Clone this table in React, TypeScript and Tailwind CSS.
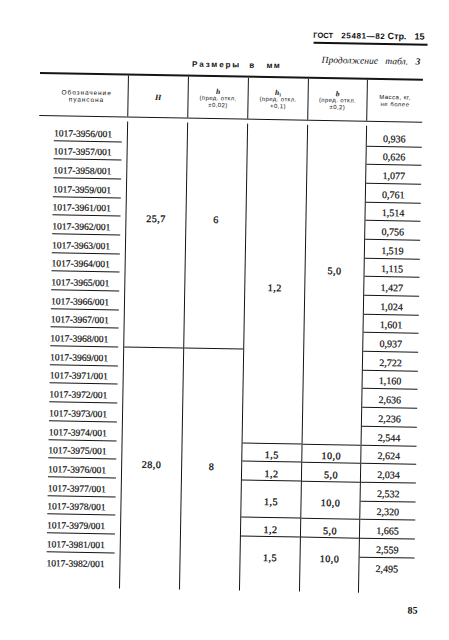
const rows: [string, string][] = [
  ['1017-3956/001', '0,936'],
  ['1017-3957/001', '0,626'],
  ['1017-3958/001', '1,077'],
  ['1017-3959/001', '0,761'],
  ['1017-3961/001', '1,514'],
  ['1017-3962/001', '0,756'],
  ['1017-3963/001', '1,519'],
  ['1017-3964/001', '1,115'],
  ['1017-3965/001', '1,427'],
  ['1017-3966/001', '1,024'],
  ['1017-3967/001', '1,601'],
  ['1017-3968/001', '0,937'],
  ['1017-3969/001', '2,722'],
  ['1017-3971/001', '1,160'],
  ['1017-3972/001', '2,636'],
  ['1017-3973/001', '2,236'],
  ['1017-3974/001', '2,544'],
  ['1017-3975/001', '2,624'],
  ['1017-3976/001', '2,034'],
  ['1017-3977/001', '2,532'],
  ['1017-3978/001', '2,320'],
  ['1017-3979/001', '1,665'],
  ['1017-3981/001', '2,559'],
  ['1017-3982/001', '2,495'],
]

// first body row is a bit taller (gap under the header)
const rowH = (i: number) => (i === 0 ? 'h-[20.5px]' : 'h-[18.7px]')

const val = 'text-[10px] leading-[10px] tracking-[0.5px] [-webkit-text-stroke:0.3px_#111]'
const line = 'border-[#151515]'
const small = "font-['Liberation_Sans',sans-serif] text-[6px] leading-[7px] tracking-[0.4px]"

function HeadTol({ sym, tol, w }: { sym: React.ReactNode; tol: string; w: string }) {
  return (
    <div className={`flex ${w} flex-col items-center justify-center border-l ${line} pt-[2px]`}>
      <span className="text-[7.5px] font-bold italic leading-[7px]">{sym}</span>
      <span className={small}>(пред. откл.</span>
      <span className={small}>{tol}</span>
    </div>
  )
}

// h1 / b columns: one long cell, then the short alternating cells
function LowerCells({ vals }: { vals: string[] }) {
  return (
    <>
      <div className={`flex h-[18.7px] items-end justify-center border-b ${line} pb-[1px] ${val}`}>{vals[0]}</div>
      <div className={`flex h-[18.7px] items-end justify-center border-b ${line} pb-[1px] ${val}`}>{vals[1]}</div>
      <div className={`flex h-[37.4px] items-center justify-center border-b ${line} pt-[6px] ${val}`}>{vals[2]}</div>
      <div className={`flex h-[18.7px] items-end justify-center border-b ${line} pb-[1px] ${val}`}>{vals[3]}</div>
      <div className={`flex h-[37.4px] items-center justify-center pt-[4px] ${val}`}>{vals[4]}</div>
      <div className="h-[16px]" />
    </>
  )
}

function Table() {
  return (
    <div className="ml-[40px] w-[383px]">
      <div className={`flex h-[44px] border-t-2 border-b-[1.5px] ${line}`}>
        <div className="flex w-[88px] flex-col items-center justify-center pl-[6px] font-['Liberation_Sans',sans-serif] text-[6.5px] leading-[7px] tracking-[0.9px]">
          <span>Обозначение</span>
          <span>пуансона</span>
        </div>
        <div className={`flex w-[60px] items-center justify-center border-l ${line} pt-[3px] text-[8px] font-bold italic`}>
          H
        </div>
        <HeadTol w="w-[60px]" sym="h" tol="±0,02)" />
        <HeadTol
          w="w-[60px]"
          sym={
            <>
              h<sub className="text-[4.5px] not-italic">1</sub>
            </>
          }
          tol="+0,1)"
        />
        <HeadTol w="w-[59px]" sym="b" tol="±0,2)" />
        <div className={`flex w-[56px] flex-col items-center justify-center border-l ${line} font-['Liberation_Sans',sans-serif] text-[6px] leading-[7px] tracking-[0.5px]`}>
          <span>Масса, кг,</span>
          <span>не более</span>
        </div>
      </div>

      <div className="mt-[4px] flex">
        <div className="flex w-[88px] flex-col">
          {rows.map(([d], i) => (
            <div key={d} className={`${rowH(i)} flex items-end pl-[15px] pr-[5px]`}>
              <div
                className={`w-full pb-[2px] text-[9.5px] leading-[10px] [-webkit-text-stroke:0.2px_#111] ${
                  i === rows.length - 1 ? '' : `border-b ${line}`
                }`}
              >
                {d}
              </div>
            </div>
          ))}
          <div className="h-[16px]" />
        </div>

        <div className={`flex w-[60px] flex-col border-l ${line}`}>
          <div className={`flex h-[226.2px] justify-center border-b ${line} pt-[92px] ${val}`}>25,7</div>
          <div className={`flex h-[224.4px] justify-center pt-[112px] ${val}`}>28,0</div>
          <div className="h-[16px]" />
        </div>

        <div className={`flex w-[60px] flex-col border-l ${line}`}>
          <div className={`flex h-[226.2px] justify-center border-b ${line} pt-[92px] ${val}`}>6</div>
          <div className={`flex h-[224.4px] justify-center pt-[113px] ${val}`}>8</div>
          <div className="h-[16px]" />
        </div>

        <div className={`flex w-[60px] flex-col border-l ${line}`}>
          <div className={`flex h-[319.7px] justify-center border-b ${line} pt-[159px] ${val}`}>1,2</div>
          <LowerCells vals={['1,5', '1,2', '1,5', '1,2', '1,5']} />
        </div>

        <div className={`flex w-[59px] flex-col border-l ${line}`}>
          <div className={`flex h-[319.7px] justify-center border-b ${line} pt-[141px] ${val}`}>5,0</div>
          <LowerCells vals={['10,0', '5,0', '10,0', '5,0', '10,0']} />
        </div>

        <div className={`flex w-[56px] flex-col border-l ${line}`}>
          {rows.map(([d, m], i) => (
            <div
              key={d}
              className={`${rowH(i)} flex items-end justify-center pb-[2px] text-[10px] leading-[10px] [-webkit-text-stroke:0.2px_#111] ${
                i === rows.length - 1 ? '' : `border-b ${line}`
              }`}
            >
              {m}
            </div>
          ))}
          <div className="h-[16px]" />
        </div>
      </div>
    </div>
  )
}

export default function App() {
  return (
    <div className="h-[640px] w-[449px] overflow-hidden bg-white font-['Liberation_Serif',serif] text-[#111]">
      {/* the scan is turned about a degree clockwise */}
      <div className="origin-[40px_72px] rotate-[1deg]">
        <div className="pt-[23.5px]">
          <div className="h-[12px] pr-[25px] text-right font-['Liberation_Sans',sans-serif] text-[8px] font-bold leading-[12px]">
            <span className="text-[7.5px]">ГОСТ</span> <span className="ml-[6px] tracking-[0.6px]">25481—82</span>{' '}
            <span className="text-[9px]">Стр.</span> <span className="ml-[6px] text-[9px]">15</span>
          </div>
          <div className="ml-[313px] mt-[1px] h-[2px] w-[114px] bg-[#111]" />
          <div className="mt-[10.5px] flex h-[23px] items-start">
            <div className="ml-[192px] mt-[7.6px] font-['Liberation_Sans',sans-serif] text-[8px] font-bold leading-[10px]">
              <span className="tracking-[1.9px]">Размеры</span> <span className="ml-[6px]">в</span>{' '}
              <span className="ml-[10px] tracking-[1.5px]">мм</span>
            </div>
            <div className="ml-auto mr-[29px] text-[9.5px] italic leading-[12px] [word-spacing:5px]">
              Продолжение табл. <span className="font-bold">3</span>
            </div>
          </div>
        </div>

        <Table />

        <div className="mt-[12.4px] flex justify-end pr-[22px] text-[10px] font-bold leading-[10px]">85</div>
      </div>
    </div>
  )
}
